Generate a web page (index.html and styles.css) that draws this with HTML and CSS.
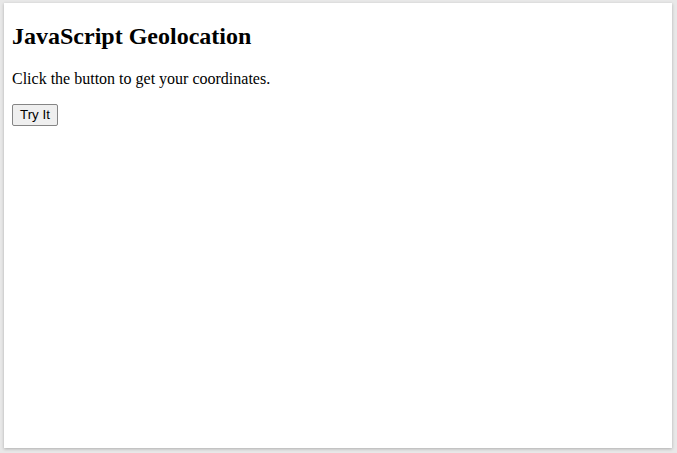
FILE: index.html
```html
<!DOCTYPE html>
<html lang="en">
<head>
    <meta charset="UTF-8">
    <title>JavaScript Geolocation</title>
    <link rel="stylesheet" href="styles.css">
</head>
<body>
    <div class="frame">
        <h2>JavaScript Geolocation</h2>
        <p>Click the button to get your coordinates.</p>
        <button onclick="getLocation()">Try It</button>
        <p id="demo"></p>
    </div>

    <script>
        function getLocation() {
            const demo = document.getElementById('demo');
            if (navigator.geolocation) {
                navigator.geolocation.getCurrentPosition(function (pos) {
                    demo.innerText = 'Latitude: ' + pos.coords.latitude + '\nLongitude: ' + pos.coords.longitude;
                });
            } else {
                demo.innerText = 'Geolocation is not supported by this browser.';
            }
        }
    </script>
</body>
</html>
```

FILE: styles.css
```css
html, body {
    margin: 0;
    height: 100%;
}
body {
    background: #e8e8e8;
    padding: 3px 5px 5px 4px;
    box-sizing: border-box;
    display: flex;
    font-family: 'Liberation Serif', 'Times New Roman', serif;
}
.frame {
    flex: 1;
    background: #fff;
    padding: 1px 8px 8px;
    box-shadow: 0 1px 3px rgba(0,0,0,0.25);
    color: #000;
}
.frame h2 {
    font-size: 24px;
    margin: 19px 0 20px;
}
.frame p {
    font-size: 16px;
    margin: 16px 0;
}
button {
    font-family: 'Liberation Sans', Arial, sans-serif;
    font-size: 13.33px;
    padding: 2px 7px 3px;
    background: #efefef;
    border: 1px solid #858585;
    border-radius: 2px;
    color: #000;
}
```
